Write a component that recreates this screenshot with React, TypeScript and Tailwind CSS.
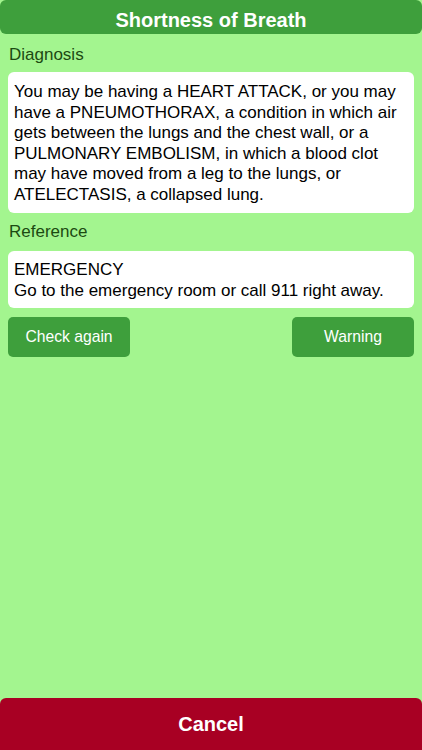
import React from 'react';

export default function App() {
  return (
    <div className="w-[422px] h-[750px] bg-[#a3f58f] flex flex-col font-['Liberation_Sans',Arial,sans-serif] overflow-hidden">
      {/* Title bar */}
      <div className="h-[34px] shrink-0 bg-[#3e9f3c] rounded-md flex justify-center pt-[10px]">
        <h1 className="text-white font-bold text-[20px] leading-[20px]">Shortness of Breath</h1>
      </div>

      <div className="flex-1 flex flex-col px-[8px]">
        <div className="text-[#1c4a12] text-[17px] leading-[20px] mt-[11px] mb-[7px] pl-[1px]">Diagnosis</div>
        <div className="bg-white rounded-[6px] px-[6px] pt-[10px] pb-[8px] text-black text-[17px] leading-[20.5px]">
          You may be having a HEART ATTACK, or you may have a PNEUMOTHORAX, a condition in which air gets between the lungs and the chest wall, or a PULMONARY EMBOLISM, in which a blood clot may have moved from a leg to the lungs, or ATELECTASIS, a collapsed lung.
        </div>

        <div className="text-[#1c4a12] text-[17px] leading-[20px] mt-[9px] mb-[9px] pl-[1px]">Reference</div>
        <div className="bg-white rounded-[6px] px-[6px] pt-[8px] pb-[7px] text-black text-[17px] leading-[21px]">
          <div>EMERGENCY</div>
          <div>Go to the emergency room or call 911 right away.</div>
        </div>

        <div className="flex justify-between mt-[9px]">
          <button className="w-[122px] h-[40px] bg-[#3e9f3c] rounded-[5px] text-white text-[15.7px]">Check again</button>
          <button className="w-[122px] h-[40px] bg-[#3e9f3c] rounded-[5px] text-white text-[15.7px]">Warning</button>
        </div>
      </div>

      <button className="h-[52px] shrink-0 bg-[#a80023] rounded-t-[6px] text-white font-bold text-[20px]">Cancel</button>
    </div>
  );
}
